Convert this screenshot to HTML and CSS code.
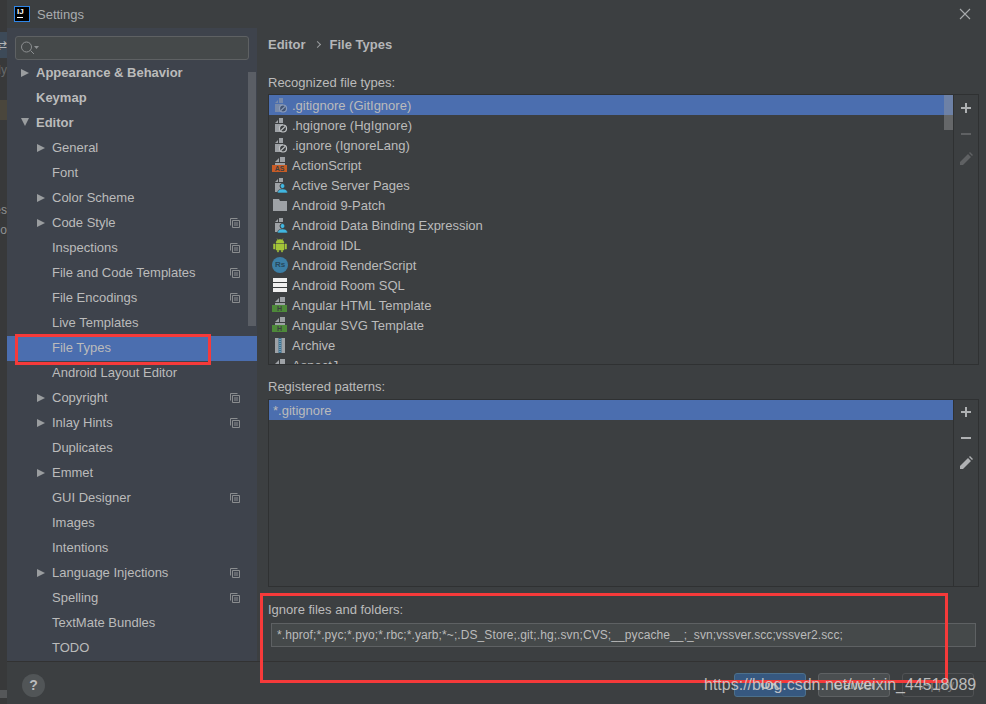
FILE: index.html
```html
<!DOCTYPE html>
<html lang="en">

<head>
    <meta charset="UTF-8">
    <title>Settings</title>
    <link rel="stylesheet" href="styles.css">
</head>

<body>
    <svg class="defs" width="0" height="0">
        <symbol id="copy" viewBox="0 0 10 10">
            <path d="M.5 7.500V.5h7M2.500 2.500h7v7h-7zM4 5h4M4 7h4" fill="none" stroke="#8a8d8f"/>
        </symbol>
        <symbol id="file" viewBox="0 0 14 16">
            <path d="M2 7 6 3v4zM7 2h5v5H7zM2 8h10v7H2z" fill="#9ea2a6"/>
        </symbol>
        <symbol id="doctop" viewBox="0 0 14 9">
            <path d="M3 5 7 1v4zM8 0h5v5H8zM3 6h10v3H3z" fill="#9ea2a6"/>
        </symbol>
        <symbol id="ignore" viewBox="0 0 16 16">
            <path d="M3 6 6 3v3zM7 1h4v5H7zM3 7h8v8H3z" fill="#9ea2a6"/>
            <circle cx="11" cy="11.500" r="3.500" fill="#3c3f41" stroke="#c2c5c7" stroke-width="1.200"/>
            <path d="m8.800 13.700 4.400-4.400" stroke="#c2c5c7" stroke-width="1.200"/>
        </symbol>
        <symbol id="server" viewBox="0 0 16 16">
            <path d="M3 5 6 2v3zM7 1h4v4H7zM3 6h8v9H3z" fill="#9ea2a6"/>
            <circle cx="10.500" cy="9" r="2.500" fill="#40b6e0" stroke="#3c3f41"/>
            <path d="M5.500 16c0-3 2-4 5-4s5 1 5 4z" fill="#40b6e0" stroke="#3c3f41" stroke-width=".6"/>
        </symbol>
        <symbol id="folder" viewBox="0 0 16 16">
            <path d="M1 2h6l1 2h7v10H1z" fill="#9ea2a6"/>
        </symbol>
        <symbol id="android" viewBox="0 0 16 16">
            <path d="M4 6a4 3.500 0 0 1 8 0zM4 7h8v6h-1.500v2h-1v-2h-3v2h-1v-2H4zM1.500 7h1.500v5H1.500zM13 7h1.500v5H13zM5 1.500l1 2M11 1.500l-1 2" fill="#a4c639" stroke="#a4c639" stroke-width=".5"/>
        </symbol>
        <symbol id="room" viewBox="0 0 16 16">
            <path d="M1 1h14v4H1zM1 6h14v4H1zM1 11h14v4H1z" fill="#f0f0f0"/>
        </symbol>
        <symbol id="zip" viewBox="0 0 16 16">
            <path d="M3 1h10v15H3z" fill="#9ea2a6"/>
            <path d="M6.500 1h3v15h-3z" fill="#3c6e8c"/>
            <path d="M8 2v13" stroke="#9ec6dc" stroke-dasharray="1 1"/>
        </symbol>
    </svg>

    <div class="desktop">
        <div class="behind-band band-blue"></div>
        <div class="behind-band band-brown"></div>
        <div class="behind-band band-grey"></div>
        <span class="behind behind-icon">⇄</span>
        <span class="behind behind-c">dy</span>
        <span class="behind behind-a">es</span>
        <span class="behind behind-b">o</span>
    </div>

    <div class="dialog">
        <!-- Title bar -->
        <div class="titlebar">
            <div class="app-logo"><span class="logo-text">IJ</span><span class="logo-bar"></span></div>
            <span class="title">Settings</span>
            <svg class="close" width="12" height="12" viewBox="0 0 12 12"><path d="M1 1l10 10M11 1 1 11" stroke="#a8abad" stroke-width="1.100"/></svg>
        </div>

        <div class="main">
            <!-- Side menu -->
            <div class="sidebar">
                <div class="search">
                    <svg width="20" height="16" viewBox="0 0 20 16"><circle cx="6.500" cy="7" r="5" fill="none" stroke="#8c8f91"/><path d="m10.500 10.500 3.500 3.500" stroke="#8c8f91"/><path d="M14 6h5l-2.500 3z" fill="#8c8f91"/></svg>
                </div>
                <div class="tree-clip">
                    <div class="tree">
                        <div class="row bold"><span class="arrow right top"></span>Appearance &amp; Behavior</div>
                        <div class="row bold">Keymap</div>
                        <div class="row bold"><span class="arrow down top"></span>Editor</div>
                        <div class="row sub"><span class="arrow right"></span>General</div>
                        <div class="row sub">Font</div>
                        <div class="row sub"><span class="arrow right"></span>Color Scheme</div>
                        <div class="row sub"><span class="arrow right"></span>Code Style<svg class="copy"><use href="#copy"/></svg></div>
                        <div class="row sub">Inspections<svg class="copy"><use href="#copy"/></svg></div>
                        <div class="row sub">File and Code Templates<svg class="copy"><use href="#copy"/></svg></div>
                        <div class="row sub">File Encodings<svg class="copy"><use href="#copy"/></svg></div>
                        <div class="row sub">Live Templates</div>
                        <div class="row sub selected">File Types</div>
                        <div class="row sub">Android Layout Editor</div>
                        <div class="row sub"><span class="arrow right"></span>Copyright<svg class="copy"><use href="#copy"/></svg></div>
                        <div class="row sub"><span class="arrow right"></span>Inlay Hints<svg class="copy"><use href="#copy"/></svg></div>
                        <div class="row sub">Duplicates</div>
                        <div class="row sub"><span class="arrow right"></span>Emmet</div>
                        <div class="row sub">GUI Designer<svg class="copy"><use href="#copy"/></svg></div>
                        <div class="row sub">Images</div>
                        <div class="row sub">Intentions</div>
                        <div class="row sub"><span class="arrow right"></span>Language Injections<svg class="copy"><use href="#copy"/></svg></div>
                        <div class="row sub">Spelling<svg class="copy"><use href="#copy"/></svg></div>
                        <div class="row sub">TextMate Bundles</div>
                        <div class="row sub">TODO</div>
                    </div>
                    <div class="tree-thumb"></div>
                </div>
            </div>

            <!-- Content -->
            <div class="content">
                <div class="crumbs"><span>Editor</span><span class="crumb-sep"></span><span>File Types</span></div>

                <div class="label types-label">Recognized file types:</div>
                <div class="panel types">
                    <div class="list">
                        <div class="item selected"><svg class="ficon faded"><use href="#ignore"/></svg>.gitignore (GitIgnore)</div>
                        <div class="item"><svg class="ficon"><use href="#ignore"/></svg>.hgignore (HgIgnore)</div>
                        <div class="item"><svg class="ficon"><use href="#ignore"/></svg>.ignore (IgnoreLang)</div>
                        <div class="item"><span class="ficon doc"><svg class="doc-top"><use href="#doctop"/></svg><span class="tag tag-as">AS</span></span>ActionScript</div>
                        <div class="item"><svg class="ficon"><use href="#server"/></svg>Active Server Pages</div>
                        <div class="item"><svg class="ficon"><use href="#folder"/></svg>Android 9-Patch</div>
                        <div class="item"><svg class="ficon"><use href="#server"/></svg>Android Data Binding Expression</div>
                        <div class="item"><svg class="ficon"><use href="#android"/></svg>Android IDL</div>
                        <div class="item"><span class="ficon rs">Rs</span>Android RenderScript</div>
                        <div class="item"><svg class="ficon"><use href="#room"/></svg>Android Room SQL</div>
                        <div class="item"><span class="ficon doc"><svg class="doc-top"><use href="#doctop"/></svg><span class="tag tag-h">H</span></span>Angular HTML Template</div>
                        <div class="item"><span class="ficon doc"><svg class="doc-top"><use href="#doctop"/></svg><span class="tag tag-h">H</span></span>Angular SVG Template</div>
                        <div class="item"><svg class="ficon"><use href="#zip"/></svg>Archive</div>
                        <div class="item"><svg class="ficon"><use href="#file"/></svg>AspectJ</div>
                    </div>
                    <div class="list-thumb"></div>
                    <div class="tools">
                        <svg class="tool" viewBox="0 0 14 14"><path d="M7 2v10M2 7h10" stroke="#afb1b3" stroke-width="2"/></svg>
                        <svg class="tool" viewBox="0 0 14 14"><path d="M2 7h10" stroke="#5f6163" stroke-width="2"/></svg>
                        <svg class="tool" viewBox="0 0 14 14"><path d="M1 13V10L9 2l3 3-8 8zM10 1l1-1 3 3-1 1z" fill="#5f6163"/></svg>
                    </div>
                </div>

                <div class="label patterns-label">Registered patterns:</div>
                <div class="panel patterns">
                    <div class="list">
                        <div class="item pattern selected">*.gitignore</div>
                    </div>
                    <div class="tools">
                        <svg class="tool" viewBox="0 0 14 14"><path d="M7 2v10M2 7h10" stroke="#afb1b3" stroke-width="2"/></svg>
                        <svg class="tool" viewBox="0 0 14 14"><path d="M2 7h10" stroke="#afb1b3" stroke-width="2"/></svg>
                        <svg class="tool" viewBox="0 0 14 14"><path d="M1 13V10L9 2l3 3-8 8zM10 1l1-1 3 3-1 1z" fill="#afb1b3"/></svg>
                    </div>
                </div>

                <div class="label ignore-label">Ignore files and folders:</div>
                <div class="ignore-input">*.hprof;*.pyc;*.pyo;*.rbc;*.yarb;*~;.DS_Store;.git;.hg;.svn;CVS;__pycache__;_svn;vssver.scc;vssver2.scc;</div>
            </div>
        </div>

        <!-- Footer -->
        <div class="footer">
            <div class="help">?</div>
            <div class="buttons">
                <div class="btn primary">OK</div>
                <div class="btn">Cancel</div>
                <div class="btn disabled">Apply</div>
            </div>
        </div>
    </div>

    <!-- Red marks and watermark drawn on top of the screenshot -->
    <div class="mark mark-types"></div>
    <div class="mark mark-ignore"></div>
    <div class="watermark">https://blog.csdn.net/weixin_44518089</div>
</body>
</html>
```

FILE: styles.css
```css
/* General Styles */
html, body {
    margin: 0;
    height: 100%;
}

body {
    position: relative;
    width: 986px;
    height: 704px;
    overflow: hidden;
    display: flex;
    font-family: "Liberation Sans", Arial, sans-serif;
    font-size: 13px;
    color: #bbbbbb;
    background-color: #3c3f41;
}

.defs {
    position: absolute;
}

/* Window behind the dialog */
.desktop {
    position: relative;
    width: 7px;
    flex: none;
    background-color: #38393a;
    overflow: hidden;
}

.behind-band {
    position: absolute;
    left: 0;
    width: 7px;
}

.band-blue {
    top: 32px;
    height: 26px;
    background-color: #3d4a58;
}

.band-brown {
    top: 100px;
    height: 20px;
    background-color: #4a463c;
}

.band-grey {
    top: 690px;
    height: 8px;
    background-color: #555759;
}

.behind {
    position: absolute;
    right: 0;
    color: #8f9294;
    font-size: 12px;
}

.behind-icon {
    top: 38px;
    color: #b4b6b8;
}

.behind-c {
    top: 63px;
    color: #66696b;
}

.behind-a {
    top: 203px;
}

.behind-b {
    top: 223px;
}

/* Dialog */
.dialog {
    flex: 1;
    display: flex;
    flex-direction: column;
    min-width: 0;
}

.titlebar {
    height: 28px;
    flex: none;
    display: flex;
    align-items: center;
    padding-left: 7px;
    background-color: #3c3f41;
}

.app-logo {
    position: relative;
    width: 16px;
    height: 16px;
    box-sizing: border-box;
    background-color: #000000;
    border: 1px solid #2f86e8;
    margin-right: 7px;
}

.logo-text {
    display: block;
    color: #ffffff;
    font-size: 8px;
    font-weight: bold;
    line-height: 9px;
    padding-left: 2px;
}

.logo-bar {
    display: block;
    width: 6px;
    height: 1px;
    margin: 1px 0 0 2px;
    background-color: #ffffff;
}

.title {
    color: #a9acae;
    flex: 1;
}

.close {
    margin-right: 15px;
}

.main {
    flex: 1;
    display: flex;
    min-height: 0;
}

/* Sidebar */
.sidebar {
    width: 250px;
    flex: none;
    display: flex;
    flex-direction: column;
    background-color: #3e434c;
    border-bottom: 1px solid #323232;
    box-sizing: border-box;
}

.search {
    height: 22px;
    margin: 8px 8px 0;
    padding-left: 4px;
    display: flex;
    align-items: center;
    background-color: #45494a;
    border: 1px solid #5e6163;
    border-radius: 3px;
}

.tree-clip {
    position: relative;
    flex: 1;
    overflow: hidden;
    margin-top: 8px;
}

.tree {
    margin-top: -7px;
}

.row {
    position: relative;
    height: 25px;
    line-height: 23px;
    color: #bbbbbb;
    padding-left: 29px;
}

.row.bold {
    font-weight: bold;
}

.row.sub {
    padding-left: 45px;
}

.row.selected {
    background-color: #4b6eaf;
}

.arrow {
    position: absolute;
    left: 30px;
    top: 8px;
    width: 0;
    height: 0;
}

.arrow.top {
    left: 14px;
}

.arrow.right {
    border-top: 4.5px solid transparent;
    border-bottom: 4.5px solid transparent;
    border-left: 8px solid #9a9d9f;
}

.arrow.down {
    top: 7px;
    border-left: 4.5px solid transparent;
    border-right: 4.5px solid transparent;
    border-top: 8px solid #9a9d9f;
}

.copy {
    position: absolute;
    right: 17px;
    top: 7px;
    width: 10px;
    height: 10px;
}

.tree-thumb {
    position: absolute;
    right: 1px;
    top: 4px;
    width: 8px;
    height: 254px;
    background-color: #5a5e65;
}

/* Content */
.content {
    position: relative;
    flex: 1;
    min-width: 0;
    padding-left: 11px;
    padding-right: 7px;
    border-bottom: 1px solid #323232;
    display: flex;
    flex-direction: column;
}

.crumbs {
    display: flex;
    align-items: center;
    height: 17px;
    margin-top: 8px;
    font-weight: bold;
    color: #b4b6b8;
    gap: 9px;
}

.crumb-sep {
    width: 4px;
    height: 4px;
    margin-right: 1px;
    border-top: 1px solid #9a9d9f;
    border-right: 1px solid #9a9d9f;
    transform: rotate(45deg);
}

.label {
    height: 16px;
    line-height: 16px;
    color: #bbbbbb;
}

.types-label {
    margin-top: 22px;
}

.patterns-label {
    margin-top: 14px;
}

.ignore-label {
    margin-top: 15px;
}

.panel {
    position: relative;
    display: flex;
    border: 1px solid #2f3132;
    box-sizing: border-box;
}

.types {
    height: 271px;
    margin-top: 3px;
}

.patterns {
    height: 188px;
    margin-top: 4px;
}

.list {
    flex: 1;
    min-width: 0;
    overflow: hidden;
    border-right: 1px solid #2f3132;
}

.tools {
    width: 24px;
    flex: none;
    display: flex;
    flex-direction: column;
    align-items: center;
    gap: 11.5px;
    padding-top: 6px;
}

.patterns .tools {
    padding-top: 5px;
}

.tool {
    width: 14px;
    height: 14px;
}

.item {
    display: flex;
    align-items: center;
    height: 20px;
    padding-left: 3px;
    color: #bbbbbb;
    white-space: nowrap;
}

.item.selected {
    background-color: #4b6eaf;
}

.item.pattern {
    padding-left: 4px;
}

.ficon {
    width: 16px;
    height: 16px;
    flex: none;
    margin-right: 4px;
}

.ficon.faded {
    opacity: 0.55;
}

.doc {
    display: flex;
    flex-direction: column;
    align-items: flex-start;
}

.doc-top {
    width: 14px;
    height: 9px;
    margin-bottom: -1px;
}

.tag {
    width: 15px;
    height: 7px;
    font-size: 7px;
    font-weight: bold;
    line-height: 7px;
    text-align: center;
    color: #3c3f41;
}

.tag-as {
    background-color: #c75c26;
}

.tag-h {
    background-color: #4e8a3a;
}

.rs {
    box-sizing: border-box;
    border-radius: 50%;
    background-color: #3c7fa6;
    color: #27485c;
    font-size: 8px;
    font-weight: bold;
    line-height: 15px;
    text-align: center;
}

.list-thumb {
    position: absolute;
    left: 675px;
    top: 0;
    width: 9px;
    height: 35px;
    background-color: rgba(150, 152, 156, 0.45);
}

.ignore-input {
    height: 22px;
    line-height: 22px;
    margin: 5px 3px 0 3px;
    padding-left: 5px;
    font-size: 12px;
    letter-spacing: 0.09px;
    color: #bbbbbb;
    background-color: #45494a;
    border: 1px solid #5e6163;
    white-space: nowrap;
}

/* Footer */
.footer {
    height: 42px;
    flex: none;
    box-sizing: border-box;
    display: flex;
    align-items: center;
    justify-content: space-between;
    padding: 4px 12px 0 15px;
}

.help {
    width: 23px;
    height: 23px;
    border-radius: 50%;
    background-color: #515557;
    color: #b9bbbd;
    font-size: 14px;
    font-weight: bold;
    line-height: 23px;
    text-align: center;
}

.buttons {
    display: flex;
    gap: 12px;
}

.btn {
    width: 70px;
    height: 22px;
    line-height: 22px;
    border: 1px solid #5e6163;
    border-radius: 3px;
    background-color: #4a4e50;
    text-align: center;
    color: #bbbbbb;
}

.btn.primary {
    background-color: #365880;
    border-color: #4c708c;
    font-weight: bold;
}

.btn.disabled {
    background-color: transparent;
    border-color: #505254;
    color: #777777;
}

/* Annotations over the screenshot */
.mark {
    position: absolute;
    border: 3px solid #f63a3a;
    box-sizing: border-box;
}

.mark-types {
    left: 15px;
    top: 334px;
    width: 196px;
    height: 31px;
}

.mark-ignore {
    left: 260px;
    top: 593px;
    width: 688px;
    height: 90px;
}

.watermark {
    position: absolute;
    left: 704px;
    top: 674px;
    font-size: 16px;
    line-height: 22px;
    color: rgba(210, 210, 210, 0.85);
    white-space: nowrap;
}
```
